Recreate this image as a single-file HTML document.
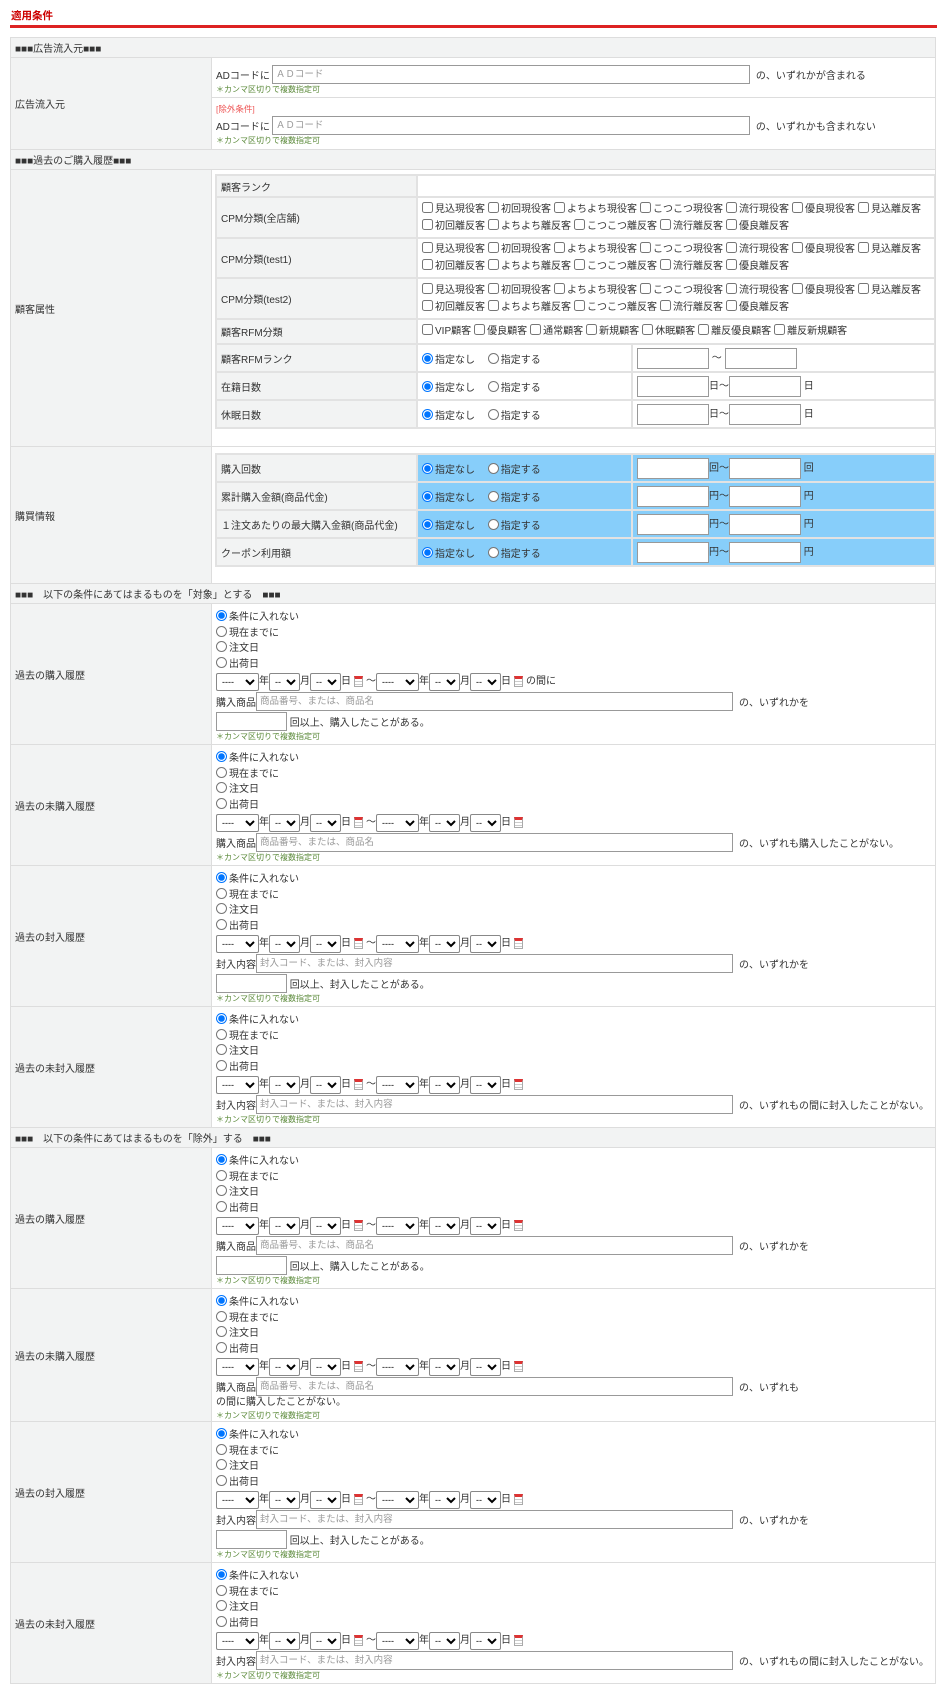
<!DOCTYPE html>
<html><head><meta charset="utf-8">
<style>
*{box-sizing:border-box}
body{margin:0;width:947px;height:1700px;background:#fff;font-family:"Liberation Sans","Noto Sans CJK JP",sans-serif;font-size:10px;color:#333;position:relative;overflow:hidden}
.title{position:absolute;left:11px;top:8px;color:#c00;font-weight:bold;font-size:10.5px}
.redline{position:absolute;left:10px;top:25px;width:927px;height:3px;background:#d22}
table.main{position:absolute;left:10px;top:37px;width:925px;border-collapse:collapse;table-layout:fixed}
table.main>tbody>tr>td{border:1px solid #ddd;padding:0;vertical-align:middle;overflow:hidden}
td.lab{background:#f2f3f3;padding-left:4px !important}
td.hd{background:#f2f3f3;height:20px;padding-left:4px !important}
td.val{padding-left:4px !important}
input[type=text]{border:1px solid #999;height:19px;font-size:9.5px;padding:1px 3px;font-family:inherit;color:#999;vertical-align:middle;margin:0}
input::placeholder{color:#999}
.note{font-size:8px;color:#5b8a3a;line-height:11px;height:11px}
.ex{font-size:8.5px;color:#e55}
input[type=radio],input[type=checkbox]{width:11px;height:11px;margin:0 2px 0 0;vertical-align:-1px}
.r{height:15.5px;line-height:15.5px;white-space:nowrap}
.d{height:19px;line-height:19px;white-space:nowrap;display:flex;align-items:center}
select{height:18px;font-size:9px;padding:0 1px;border:1px solid #888;border-radius:2px;background:#fff;margin:0;font-family:inherit}
.sy{width:43px}.sm{width:31px}
.cal{display:inline-block;width:9px;height:11px;border:1px solid #aaa;border-top:3px solid #d33;background:repeating-linear-gradient(#fff 0 2px,#ccc 2px 3px);margin:0 3px}
.p{height:20px;display:flex;align-items:center;white-space:nowrap}
table.in{border-collapse:collapse;width:719px;table-layout:fixed}
table.in td{border:2px solid #e2e2e2;padding:0 4px;vertical-align:middle;overflow:hidden}
table.in td.il{background:#f2f3f3}
.cb{display:inline-block;margin-right:3px;white-space:nowrap;line-height:17px}
.blue{background:#87cefa}
.num{width:72px;height:21px !important}
</style></head><body>
<div class="title">適用条件</div>
<div class="redline"></div>
<table class="main"><colgroup><col style="width:201px"><col style="width:724px"></colgroup><tbody>
<tr><td colspan="2" class="hd">■■■広告流入元■■■</td></tr>
<tr><td class="lab" rowspan="2">広告流入元</td>
<td class="val" style="height:40px;padding-top:3px">
<div style="display:flex;align-items:center;height:20px;margin-top:1px;white-space:nowrap">ADコードに<input type="text" placeholder="ＡＤコード" style="width:478px;margin-left:2px"><span style="margin-left:6px">の、いずれかが含まれる</span></div>
<div class="note">＊カンマ区切りで複数指定可</div></td></tr>
<tr><td class="val" style="height:52px;padding-top:2px">
<div class="ex">[除外条件]</div>
<div style="display:flex;align-items:center;height:20px;white-space:nowrap">ADコードに<input type="text" placeholder="ＡＤコード" style="width:478px;margin-left:2px"><span style="margin-left:6px">の、いずれかも含まれない</span></div>
<div class="note">＊カンマ区切りで複数指定可</div></td></tr>
<tr><td colspan="2" class="hd">■■■過去のご購入履歴■■■</td></tr>
<tr><td class="lab" style="height:277px">顧客属性</td>
<td style="vertical-align:top;padding:4px 0 0 3px">
<table class="in"><colgroup><col style="width:201px"><col style="width:215px"><col style="width:303px"></colgroup><tbody>
<tr style="height:22px"><td class="il">顧客ランク</td><td colspan="2"></td></tr>
<tr style="height:41px"><td class="il">CPM分類(全店舗)</td><td colspan="2"><span class="cb"><input type="checkbox">見込現役客</span><span class="cb"><input type="checkbox">初回現役客</span><span class="cb"><input type="checkbox">よちよち現役客</span><span class="cb"><input type="checkbox">こつこつ現役客</span><span class="cb"><input type="checkbox">流行現役客</span><span class="cb"><input type="checkbox">優良現役客</span><span class="cb"><input type="checkbox">見込離反客</span><br><span class="cb"><input type="checkbox">初回離反客</span><span class="cb"><input type="checkbox">よちよち離反客</span><span class="cb"><input type="checkbox">こつこつ離反客</span><span class="cb"><input type="checkbox">流行離反客</span><span class="cb"><input type="checkbox">優良離反客</span></td></tr>
<tr style="height:40px"><td class="il">CPM分類(test1)</td><td colspan="2"><span class="cb"><input type="checkbox">見込現役客</span><span class="cb"><input type="checkbox">初回現役客</span><span class="cb"><input type="checkbox">よちよち現役客</span><span class="cb"><input type="checkbox">こつこつ現役客</span><span class="cb"><input type="checkbox">流行現役客</span><span class="cb"><input type="checkbox">優良現役客</span><span class="cb"><input type="checkbox">見込離反客</span><br><span class="cb"><input type="checkbox">初回離反客</span><span class="cb"><input type="checkbox">よちよち離反客</span><span class="cb"><input type="checkbox">こつこつ離反客</span><span class="cb"><input type="checkbox">流行離反客</span><span class="cb"><input type="checkbox">優良離反客</span></td></tr>
<tr style="height:41px"><td class="il">CPM分類(test2)</td><td colspan="2"><span class="cb"><input type="checkbox">見込現役客</span><span class="cb"><input type="checkbox">初回現役客</span><span class="cb"><input type="checkbox">よちよち現役客</span><span class="cb"><input type="checkbox">こつこつ現役客</span><span class="cb"><input type="checkbox">流行現役客</span><span class="cb"><input type="checkbox">優良現役客</span><span class="cb"><input type="checkbox">見込離反客</span><br><span class="cb"><input type="checkbox">初回離反客</span><span class="cb"><input type="checkbox">よちよち離反客</span><span class="cb"><input type="checkbox">こつこつ離反客</span><span class="cb"><input type="checkbox">流行離反客</span><span class="cb"><input type="checkbox">優良離反客</span></td></tr>
<tr style="height:25px"><td class="il">顧客RFM分類</td><td colspan="2"><span class="cb"><input type="checkbox">VIP顧客</span><span class="cb"><input type="checkbox">優良顧客</span><span class="cb"><input type="checkbox">通常顧客</span><span class="cb"><input type="checkbox">新規顧客</span><span class="cb"><input type="checkbox">休眠顧客</span><span class="cb"><input type="checkbox">離反優良顧客</span><span class="cb"><input type="checkbox">離反新規顧客</span></td></tr>
<tr style="height:28px"><td class="il">顧客RFMランク</td><td><input type="radio" checked>指定なし　 <input type="radio">指定する</td><td><input type="text" class="num"> ～ <input type="text" class="num"></td></tr>
<tr style="height:28px"><td class="il">在籍日数</td><td><input type="radio" checked>指定なし　 <input type="radio">指定する</td><td><input type="text" class="num">日～<input type="text" class="num"> 日</td></tr>
<tr style="height:28px"><td class="il">休眠日数</td><td><input type="radio" checked>指定なし　 <input type="radio">指定する</td><td><input type="text" class="num">日～<input type="text" class="num"> 日</td></tr>
</tbody></table></td></tr>
<tr><td class="lab" style="height:137px">購買情報</td>
<td style="vertical-align:top;padding:6px 0 0 3px">
<table class="in"><colgroup><col style="width:201px"><col style="width:215px"><col style="width:303px"></colgroup><tbody>
<tr style="height:28px"><td class="il">購入回数</td><td class="blue"><input type="radio" checked>指定なし　 <input type="radio">指定する</td><td class="blue"><input type="text" class="num">回～<input type="text" class="num"> 回</td></tr>
<tr style="height:28px"><td class="il">累計購入金額(商品代金)</td><td class="blue"><input type="radio" checked>指定なし　 <input type="radio">指定する</td><td class="blue"><input type="text" class="num">円～<input type="text" class="num"> 円</td></tr>
<tr style="height:28px"><td class="il">１注文あたりの最大購入金額(商品代金)</td><td class="blue"><input type="radio" checked>指定なし　 <input type="radio">指定する</td><td class="blue"><input type="text" class="num">円～<input type="text" class="num"> 円</td></tr>
<tr style="height:28px"><td class="il">クーポン利用額</td><td class="blue"><input type="radio" checked>指定なし　 <input type="radio">指定する</td><td class="blue"><input type="text" class="num">円～<input type="text" class="num"> 円</td></tr>
</tbody></table></td></tr>

<tr><td colspan="2" class="hd">■■■　以下の条件にあてはまるものを「対象」とする　■■■</td></tr>

<tr><td class="lab" style="height:141px">過去の購入履歴</td><td class="val" style="vertical-align:top;padding-top:6px">
<div class="r"><input type="radio" checked>条件に入れない</div><div class="r"><input type="radio">現在までに</div><div class="r"><input type="radio">注文日</div><div class="r"><input type="radio">出荷日</div>
<div class="d"><select class="sy"><option>----</option></select>年<select class="sm"><option>--</option></select>月<select class="sm"><option>--</option></select>日<span class="cal"></span>～ <select class="sy"><option>----</option></select>年<select class="sm"><option>--</option></select>月<select class="sm"><option>--</option></select>日<span class="cal"></span>の間に</div>
<div class="p">購入商品<input type="text" placeholder="商品番号、または、商品名" style="width:477px"><span style="margin-left:6px">の、いずれかを</span></div>
<div class="p"><input type="text" style="width:71px">&nbsp;回以上、購入したことがある。</div>
<div class="note">＊カンマ区切りで複数指定可</div></td></tr>

<tr><td class="lab" style="height:121px">過去の未購入履歴</td><td class="val" style="vertical-align:top;padding-top:6px">
<div class="r"><input type="radio" checked>条件に入れない</div><div class="r"><input type="radio">現在までに</div><div class="r"><input type="radio">注文日</div><div class="r"><input type="radio">出荷日</div>
<div class="d"><select class="sy"><option>----</option></select>年<select class="sm"><option>--</option></select>月<select class="sm"><option>--</option></select>日<span class="cal"></span>～ <select class="sy"><option>----</option></select>年<select class="sm"><option>--</option></select>月<select class="sm"><option>--</option></select>日<span class="cal"></span></div>
<div class="p">購入商品<input type="text" placeholder="商品番号、または、商品名" style="width:477px"><span style="margin-left:6px">の、いずれも購入したことがない。</span></div>
<div class="note">＊カンマ区切りで複数指定可</div></td></tr>

<tr><td class="lab" style="height:141px">過去の封入履歴</td><td class="val" style="vertical-align:top;padding-top:6px">
<div class="r"><input type="radio" checked>条件に入れない</div><div class="r"><input type="radio">現在までに</div><div class="r"><input type="radio">注文日</div><div class="r"><input type="radio">出荷日</div>
<div class="d"><select class="sy"><option>----</option></select>年<select class="sm"><option>--</option></select>月<select class="sm"><option>--</option></select>日<span class="cal"></span>～ <select class="sy"><option>----</option></select>年<select class="sm"><option>--</option></select>月<select class="sm"><option>--</option></select>日<span class="cal"></span></div>
<div class="p">封入内容<input type="text" placeholder="封入コード、または、封入内容" style="width:477px"><span style="margin-left:6px">の、いずれかを</span></div>
<div class="p"><input type="text" style="width:71px">&nbsp;回以上、封入したことがある。</div>
<div class="note">＊カンマ区切りで複数指定可</div></td></tr>

<tr><td class="lab" style="height:121px">過去の未封入履歴</td><td class="val" style="vertical-align:top;padding-top:6px">
<div class="r"><input type="radio" checked>条件に入れない</div><div class="r"><input type="radio">現在までに</div><div class="r"><input type="radio">注文日</div><div class="r"><input type="radio">出荷日</div>
<div class="d"><select class="sy"><option>----</option></select>年<select class="sm"><option>--</option></select>月<select class="sm"><option>--</option></select>日<span class="cal"></span>～ <select class="sy"><option>----</option></select>年<select class="sm"><option>--</option></select>月<select class="sm"><option>--</option></select>日<span class="cal"></span></div>
<div class="p">封入内容<input type="text" placeholder="封入コード、または、封入内容" style="width:477px"><span style="margin-left:6px">の、いずれもの間に封入したことがない。</span></div>
<div class="note">＊カンマ区切りで複数指定可</div></td></tr>

<tr><td colspan="2" class="hd">■■■　以下の条件にあてはまるものを「除外」する　■■■</td></tr>

<tr><td class="lab" style="height:141px">過去の購入履歴</td><td class="val" style="vertical-align:top;padding-top:6px">
<div class="r"><input type="radio" checked>条件に入れない</div><div class="r"><input type="radio">現在までに</div><div class="r"><input type="radio">注文日</div><div class="r"><input type="radio">出荷日</div>
<div class="d"><select class="sy"><option>----</option></select>年<select class="sm"><option>--</option></select>月<select class="sm"><option>--</option></select>日<span class="cal"></span>～ <select class="sy"><option>----</option></select>年<select class="sm"><option>--</option></select>月<select class="sm"><option>--</option></select>日<span class="cal"></span></div>
<div class="p">購入商品<input type="text" placeholder="商品番号、または、商品名" style="width:477px"><span style="margin-left:6px">の、いずれかを</span></div>
<div class="p"><input type="text" style="width:71px">&nbsp;回以上、購入したことがある。</div>
<div class="note">＊カンマ区切りで複数指定可</div></td></tr>

<tr><td class="lab" style="height:133px">過去の未購入履歴</td><td class="val" style="vertical-align:top;padding-top:6px">
<div class="r"><input type="radio" checked>条件に入れない</div><div class="r"><input type="radio">現在までに</div><div class="r"><input type="radio">注文日</div><div class="r"><input type="radio">出荷日</div>
<div class="d"><select class="sy"><option>----</option></select>年<select class="sm"><option>--</option></select>月<select class="sm"><option>--</option></select>日<span class="cal"></span>～ <select class="sy"><option>----</option></select>年<select class="sm"><option>--</option></select>月<select class="sm"><option>--</option></select>日<span class="cal"></span></div>
<div class="p">購入商品<input type="text" placeholder="商品番号、または、商品名" style="width:477px"><span style="margin-left:6px">の、いずれも</span></div>
<div style="height:14px;line-height:14px">の間に購入したことがない。</div>
<div class="note">＊カンマ区切りで複数指定可</div></td></tr>

<tr><td class="lab" style="height:141px">過去の封入履歴</td><td class="val" style="vertical-align:top;padding-top:6px">
<div class="r"><input type="radio" checked>条件に入れない</div><div class="r"><input type="radio">現在までに</div><div class="r"><input type="radio">注文日</div><div class="r"><input type="radio">出荷日</div>
<div class="d"><select class="sy"><option>----</option></select>年<select class="sm"><option>--</option></select>月<select class="sm"><option>--</option></select>日<span class="cal"></span>～ <select class="sy"><option>----</option></select>年<select class="sm"><option>--</option></select>月<select class="sm"><option>--</option></select>日<span class="cal"></span></div>
<div class="p">封入内容<input type="text" placeholder="封入コード、または、封入内容" style="width:477px"><span style="margin-left:6px">の、いずれかを</span></div>
<div class="p"><input type="text" style="width:71px">&nbsp;回以上、封入したことがある。</div>
<div class="note">＊カンマ区切りで複数指定可</div></td></tr>

<tr><td class="lab" style="height:121px">過去の未封入履歴</td><td class="val" style="vertical-align:top;padding-top:6px">
<div class="r"><input type="radio" checked>条件に入れない</div><div class="r"><input type="radio">現在までに</div><div class="r"><input type="radio">注文日</div><div class="r"><input type="radio">出荷日</div>
<div class="d"><select class="sy"><option>----</option></select>年<select class="sm"><option>--</option></select>月<select class="sm"><option>--</option></select>日<span class="cal"></span>～ <select class="sy"><option>----</option></select>年<select class="sm"><option>--</option></select>月<select class="sm"><option>--</option></select>日<span class="cal"></span></div>
<div class="p">封入内容<input type="text" placeholder="封入コード、または、封入内容" style="width:477px"><span style="margin-left:6px">の、いずれもの間に封入したことがない。</span></div>
<div class="note">＊カンマ区切りで複数指定可</div></td></tr>
</tbody></table>
</body></html>
